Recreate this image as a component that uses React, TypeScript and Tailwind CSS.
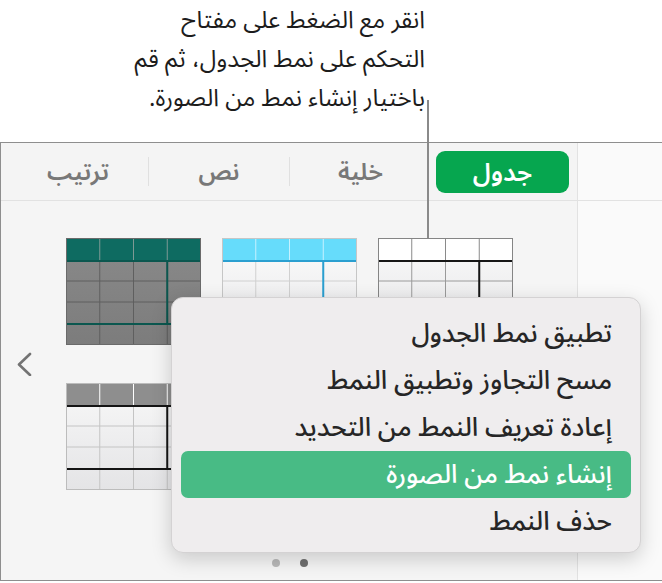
import React from "react";

type ThumbProps = {
  id: string;
  headerFill: string;
  headerSep: string;
  bodyTop: string;
  bodyBottom: string;
  grid: string;
  border: string;
  accent: string;
};

function TableThumb(p: ThumbProps) {
  const cols = [33.75, 67.5, 101.25];
  const rows = [43, 64];
  return (
    <svg width={135} height={107} viewBox="0 0 135 107" className="block">
      <defs>
        <linearGradient id={p.id} x1="0" y1="0" x2="0" y2="1">
          <stop offset="0" stopColor={p.bodyTop} />
          <stop offset="1" stopColor={p.bodyBottom} />
        </linearGradient>
      </defs>
      <rect x={0} y={0} width={135} height={107} fill={`url(#${p.id})`} />
      <rect x={0} y={0} width={135} height={23} fill={p.headerFill} />
      {cols.map((x) => (
        <line key={"h" + x} x1={x} y1={0.5} x2={x} y2={23} stroke={p.headerSep} strokeWidth={1} />
      ))}
      {cols.map((x) => (
        <line key={"b" + x} x1={x} y1={23} x2={x} y2={107} stroke={p.grid} strokeWidth={1} />
      ))}
      {rows.map((y) => (
        <line key={"r" + y} x1={0} y1={y} x2={135} y2={y} stroke={p.grid} strokeWidth={1} />
      ))}
      <line x1={0} y1={23} x2={135} y2={23} stroke={p.accent} strokeWidth={2} />
      <line x1={0} y1={86} x2={135} y2={86} stroke={p.accent} strokeWidth={2} />
      <line x1={101.25} y1={23} x2={101.25} y2={86} stroke={p.accent} strokeWidth={2} />
      <rect x={0.5} y={0.5} width={134} height={106} fill="none" stroke={p.border} strokeWidth={1} />
    </svg>
  );
}

const arabic = "font-['Noto_Sans_Arabic','DejaVu_Sans',sans-serif]";

export default function App() {
  const menuItems = [
    "تطبيق نمط الجدول",
    "مسح التجاوز وتطبيق النمط",
    "إعادة تعريف النمط من التحديد",
    "إنشاء نمط من الصورة",
    "حذف النمط",
  ];
  return (
    <div className={`relative w-[662px] h-[583px] overflow-hidden bg-white ${arabic}`}>
      {/* annotation */}
      <div className="relative h-[142px]">
        <div dir="rtl" className="pr-[237px] pt-[1px] text-right text-[24px] leading-[39px] text-[#1c1c1c]">
          <div>انقر مع الضغط على مفتاح</div>
          <div>التحكم على نمط الجدول، ثم قم</div>
          <div>باختيار إنشاء نمط من الصورة.</div>
        </div>
      </div>

      {/* panel */}
      <div className="flex h-[439px] flex-col border-t border-b border-l border-[#8e8e8e]">
        {/* tab bar */}
        <div className="flex h-[58px] border-b border-[#e2e2e2]">
          <div className="flex w-[576px] items-center bg-[#f4f4f4] pl-[7px]">
            {["ترتيب", "نص", "خلية"].map((t, i) => (
              <div key={t} className="flex h-full w-[141px] items-center">
                <div className="flex-1 pt-[3px] text-center text-[24px] leading-[40px] font-semibold text-[#787878]" dir="rtl">
                  {t}
                </div>
                {i < 2 && <div className="h-[29px] w-px bg-[#e0e0e0]" />}
              </div>
            ))}
            <div className="flex h-full w-[141px] items-center pl-[5px]">
              <div
                dir="rtl"
                className="flex h-[42px] w-[133px] items-center justify-center rounded-[9px] bg-[#06a64f] pt-[3px] text-[25px] leading-[38px] font-semibold text-white"
              >
                جدول
              </div>
            </div>
          </div>
          <div className="flex-1 border-l border-[#e2e2e2] bg-[#fafafa]" />
        </div>

        {/* content */}
        <div className="flex flex-1">
          <div className="flex w-[576px] flex-col bg-[#f5f5f5]">
            <div className="flex pt-[37px]">
              <div className="flex w-[65px] items-center pl-[16px]">
                <svg width={16} height={24} viewBox="0 0 16 24">
                  <polyline
                    points="13,2 2,12.5 13,23"
                    fill="none"
                    stroke="#737373"
                    strokeWidth={2.6}
                    strokeLinecap="round"
                    strokeLinejoin="round"
                  />
                </svg>
              </div>
              <div className="grid grid-cols-[135px_135px_135px] gap-x-[21px] gap-y-[38px]">
                <TableThumb
                  id="t1"
                  headerFill="#0e6b61"
                  headerSep="#7e9994"
                  bodyTop="#8a8a8a"
                  bodyBottom="#7c7c7c"
                  grid="#5f5f5f"
                  border="#6a6a6a"
                  accent="#0b574f"
                />
                <TableThumb
                  id="t2"
                  headerFill="#66dcfb"
                  headerSep="#c6f1ff"
                  bodyTop="#fcfcfc"
                  bodyBottom="#e5e5e7"
                  grid="#d0d0d0"
                  border="#c6c6c6"
                  accent="#2a9fd0"
                />
                <TableThumb
                  id="t3"
                  headerFill="#ffffff"
                  headerSep="#8a8a8a"
                  bodyTop="#fafafa"
                  bodyBottom="#e3e3e5"
                  grid="#9a9a9a"
                  border="#858585"
                  accent="#161616"
                />
                <TableThumb
                  id="t4"
                  headerFill="#8e8e8e"
                  headerSep="#ffffff"
                  bodyTop="#f8f8f8"
                  bodyBottom="#e4e4e6"
                  grid="#c4c4c4"
                  border="#bcbcbc"
                  accent="#141414"
                />
                <TableThumb
                  id="t5"
                  headerFill="#d9d9d9"
                  headerSep="#ffffff"
                  bodyTop="#fafafa"
                  bodyBottom="#e6e6e6"
                  grid="#cfcfcf"
                  border="#c4c4c4"
                  accent="#9a9a9a"
                />
                <TableThumb
                  id="t6"
                  headerFill="#ffffff"
                  headerSep="#bdbdbd"
                  bodyTop="#fafafa"
                  bodyBottom="#e6e6e6"
                  grid="#cfcfcf"
                  border="#c4c4c4"
                  accent="#6f6f6f"
                />
              </div>
            </div>
            <div className="mt-[69px] flex justify-center gap-[20px] pl-[1px]">
              <div className="h-[8px] w-[8px] rounded-full bg-[#b9b9b9]" />
              <div className="h-[8px] w-[8px] rounded-full bg-[#6f6f6f]" />
            </div>
          </div>
          <div className="flex-1 border-l border-[#e2e2e2] bg-[#fafafa]" />
        </div>
      </div>

      {/* callout line */}
      <div className="absolute left-[427px] top-[100px] h-[138px] w-[2px] bg-[#8a8a8a]" />

      {/* context menu */}
      <div className="absolute left-[171px] top-[297px] flex h-[256px] w-[470px] flex-col rounded-[12px] border border-[#d4d2d3] bg-[#efedee] pt-[12px] shadow-[0_6px_20px_rgba(0,0,0,0.18)]">
        {menuItems.map((t, i) => (
          <div
            key={t}
            dir="rtl"
            className={
              i === 3
                ? "mx-[9px] flex h-[47px] items-center rounded-[7px] bg-[#48bb85] pr-[19px] text-[26px] leading-[40px] font-medium text-white"
                : "mx-[9px] flex h-[47px] items-center pr-[19px] text-[26px] leading-[40px] font-medium text-[#262626]"
            }
          >
            {t}
          </div>
        ))}
      </div>
    </div>
  );
}
